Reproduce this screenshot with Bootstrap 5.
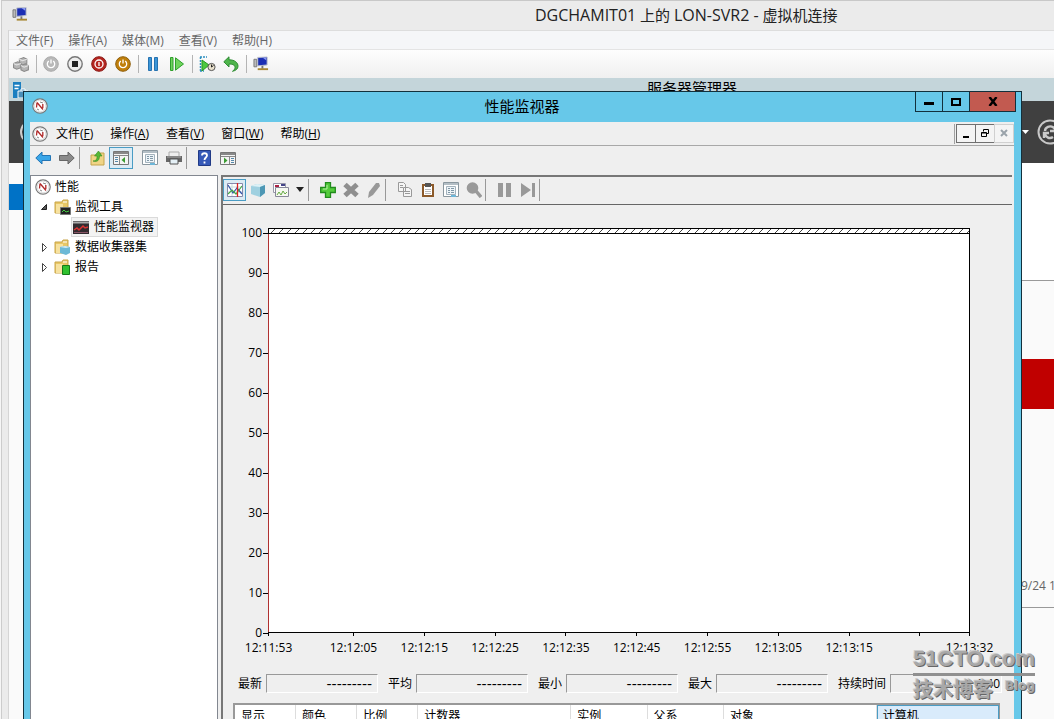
<!DOCTYPE html>
<html lang="zh-CN">
<head>
<meta charset="utf-8">
<meta name="viewport" content="width=device-width, initial-scale=1">
<title>DGCHAMIT01 上的 LON-SVR2 - 虚拟机连接</title>
<link href="https://cdn.jsdelivr.net/npm/bootstrap@5.3.0/dist/css/bootstrap.min.css" rel="stylesheet">
<style>
  body { font: 12px/16px "Open Sans", "Noto Sans CJK SC", sans-serif; color: #000; background: #f6f6f6; }
  button { padding: 0; border: 0; background: none; color: inherit; font: inherit; }
  svg { display: block; flex: none; }

  /* host window */
  .vm-window { background: #ebebeb; border-top: 1px solid #c8c8c8; border-left: 1px solid #ccc; margin-left: 1px; padding-left: 6px; }
  .vm-title { height: 29px; padding-bottom: 2px; }
  .vm-title h1 { font-size: 15px; line-height: 20px; color: #222; margin-left: 507px; white-space: nowrap; }
  .vm-title .host { font-size: 16px; }
  .vm-client { border-left: 1px solid #d5d5d5; }
  .vm-menu { height: 20px; background: #f5f6f8; color: #666; gap: 15px; padding: 2px 0 0 7px; border-top: 1px solid #ddd; border-bottom: 1px solid #e4e4e4; }
  .vm-tools { height: 28px; background: linear-gradient(#fefefe, #f0f0f0); }
  .tool { width: 24px; height: 22px; display: flex; align-items: center; justify-content: center; flex: none; }
  .tool-sep { width: 1px; height: 18px; background: #b4b4b4; margin: 0 2px 0 3px; }

  /* guest desktop and the window behind */
  .sm-title { height: 23px; background: #c4d5da; }
  .sm-title h2 { font-size: 15px; line-height: 20px; margin: 0 0 0 619px; }
  .sm-header { height: 62px; background: #404040; color: #fff; padding-left: 11px; }
  .sm-nav { width: 14px; background: #fafafa; padding-top: 21px; }
  .sm-nav-active { height: 26px; background: #0072c6; }
  .sm-side { width: 33px; background: #fafafa; color: #666; }
  .sm-blank { height: 118px; background: #fff; border-bottom: 1px solid #999; }
  .sm-alert { height: 50px; margin-top: 78px; background: #c00000; }
  .sm-time { height: 199px; padding-bottom: 13px; border-bottom: 1px solid #999; }

  /* performance monitor window */
  .pm-window { top: 13px; left: 14px; right: 32px; bottom: 0; background: #67c8e9; border: 1px solid #12303c; border-bottom: 0; padding: 0 7px 0 6px; }
  .pm-title { height: 30px; padding: 0 0 2px 2px; }
  .pm-title h2 { font-size: 15px; line-height: 20px; padding-right: 18px; }
  .pm-caption { top: -1px; right: -2px; }
  .pm-caption button { height: 21px; width: 28px; border: 1px solid #12303c; margin-left: -1px; display: flex; align-items: center; justify-content: center; }
  .pm-caption button.pm-close { width: 47px; background: #c25a50; }
  .pm-body { background: #efefef; min-height: 0; }
  .pm-menu { height: 24px; padding-left: 2px; border-bottom: 1px solid #a8a8a8; }
  .pm-menu-items { gap: 17px; padding-left: 8px; }
  .mdi { border-left: 1px solid #a0a0a0; padding: 0 1px; height: 20px; }
  .mdi button { width: 20px; height: 19px; border: 1px solid #707070; background: #f4f4f4; margin-right: -1px; display: flex; align-items: center; justify-content: center; }
  .mdi button:disabled { border-color: #d0d0d0; }
  .pm-tools { height: 26px; padding: 0 0 2px 1px; }
  .tool-gap { width: 5px; }
  .pm-sep { width: 1px; height: 22px; background: #999; margin: 0 5px 0 0; }
  .tool-on { background: #dcebf4; border: 1px solid #4a9cc4; }
  .pm-panes { gap: 3px; min-height: 0; padding: 3px 2px 0 0; }

  .tree-pane { width: 188px; background: #fff; border: 1px solid #828790; border-bottom: 0; padding: 1px 0 0 4px; flex: none; }
  .tree-pane li { height: 20px; display: flex; align-items: center; gap: 4px; }
  .tree-l1 { padding-left: 4px; }
  .tree-l2 { padding-left: 36px; }
  .tree-pane .twisty { width: 11px; height: 12px; }
  .tree-pick { background: #f3f3f3; border: 1px solid #dadada; height: 20px; padding: 0 3px 0 1px; gap: 5px; }

  .chart-pane { border-left: 2px solid #777; border-top: 2px solid #777; min-width: 0; }
  .chart-tools { height: 28px; padding-bottom: 2px; border-bottom: 1px solid #666; }
  .chart-tools .tool { width: 23px; }
  .chart-tools .caret-tool { width: 16px; }
  .chart-sep { width: 1px; height: 22px; background: #999; margin-right: 7px; }
  .chart-area { padding: 23px 42px 0 0; min-height: 0; }
  .y-axis { width: 45px; margin-top: 5px; }
  .y-axis span { height: 0; display: flex; align-items: center; justify-content: flex-end; gap: 1px; }
  .y-axis span::after { content: ""; width: 5px; height: 1px; background: #000; }
  .plot { border-right: 1px solid #000; border-bottom: 1px solid #000; background: #fff; }
  .plot-cap { height: 6px; border: solid #000; border-width: 1px 0 1px 1px; background: #fff; }
  .plot-data { border-left: 1px solid #b03030; }
  .x-axis { display: grid; grid-template-columns: 12fr repeat(8, 10fr) 7fr 0; margin: 0 43px 0 45px; height: 24px; }
  .x-axis span { width: 1px; display: flex; flex-direction: column; align-items: center; gap: 4px; white-space: nowrap; }
  .x-axis span::before { content: ""; width: 1px; height: 3px; background: #000; flex: none; }

  .stats { padding: 17px 0 0 15px; gap: 10px; height: 46px; }
  .stats label { margin-right: 4px; white-space: nowrap; }
  .stats input { width: 112px; height: 19px; border: 1px solid; border-color: #999 #fff #fff #999; background: #efefef; padding: 0 5px 0 0; text-align: right; border-radius: 0; color: #000; }
  .stats input.no-value { font: 14px "DejaVu Sans", sans-serif; }
  .stats input.short-value { padding-right: 1px; }
  .counter-wrap { margin: 0 12px 0 10px; height: 16px; border: 2px solid #999; border-width: 2px 1px 0 2px; background: #fff; overflow: hidden; }
  .counters { width: 100%; table-layout: fixed; border-collapse: separate; border-spacing: 0; }
  .counters th { font-weight: normal; padding: 3px 0 0 6px; height: 24px; line-height: 16px; vertical-align: top; border-right: 1px solid #ddd; }
  .counters th.sorted { background: #d9ebfb; border: 1px solid #4a9cc4; padding: 2px 0 0 5px; }

  .wm { right: 19px; bottom: 15px; color: #a8a8a8; font-weight: bold; text-shadow: 1px 1px 0 #666, -1px -1px 0 #ccc; pointer-events: none; }
  .wm-top { font: bold 22px/28px "Liberation Sans", sans-serif; border-bottom: 3px solid #909090; }
  .wm-cn { font-size: 20px; line-height: 28px; }
  .wm-blog { font: bold 12px/20px "DejaVu Sans", sans-serif; }
</style>
</head>
<body class="overflow-hidden">
<svg width="0" height="0" class="position-absolute" aria-hidden="true">
  <symbol id="gauge" viewBox="0 0 16 16"><circle cx="8" cy="8" r="7.200" fill="#f4f4f4" stroke="#777" stroke-width="1.200"/><circle cx="8" cy="8" r="5.900" fill="#fff" stroke="#ddd"/><path d="M4.500 9.500 5 4.500M5 4.500l6 7M10.800 6v4" fill="none" stroke="#b02828" stroke-width="1.300"/><path d="M8 4l3 1M5 11l2 1" stroke="#888"/></symbol>
  <symbol id="folder" viewBox="0 0 17 17"><path d="M1 3h7l1-2h5v13H1z" fill="#e8c766" stroke="#c9a548"/><path d="M2 5h7v9H2z" fill="#f7e2a0"/><path d="M9 3h4" stroke="#fff"/></symbol>
  <symbol id="props" viewBox="0 0 16 16"><path d="M.5.500h15v14H.5z" fill="#fff" stroke="#8a979f"/><path d="M1 2h14" stroke="#9aa8b2" stroke-width="1.500"/><path d="M3.500 4.500h9v8h-9z" fill="#eef4f8" stroke="#a3b2bc"/><path d="M5 6.500h2m1 0h3M5 8.500h2m1 0h3M5 10.500h2m1 0h3" stroke="#7f97a6"/><path d="M8 14h5" stroke="#6db6d8" stroke-width="2"/></symbol>
  <symbol id="pc" viewBox="0 0 17 16"><path d="M1 3h3v8H1z" fill="#bbb" stroke="#777"/><path d="M5 1l10-.5V9L5 10z" fill="#1c2fb4" stroke="#c0c4cc"/><path d="M10 1l4 0v3z" fill="#8d9cf0"/><path d="M10 10v3" stroke="#777" stroke-width="2"/><path d="M5 13.500h11" stroke="#a88732" stroke-width="2"/></symbol>
</svg>

<main class="vm-window vh-100 d-flex flex-column">
  <header class="vm-title d-flex align-items-center">
    <svg width="16" height="15" class="ms-1"><use href="#pc"/></svg>
    <h1 class="fw-normal mb-0"><span class="host">DGCHAMIT01</span> 上的 <span class="host">LON-SVR2 -</span> 虚拟机连接</h1>
  </header>
  <div class="vm-client flex-fill d-flex flex-column">
    <nav class="vm-menu d-flex align-items-center" aria-label="虚拟机菜单">
      <button>文件(F)</button><button>操作(A)</button><button>媒体(M)</button><button>查看(V)</button><button>帮助(H)</button>
    </nav>
    <div class="vm-tools d-flex align-items-center" role="toolbar" aria-label="虚拟机工具">
      <button class="tool" aria-label="Ctrl+Alt+Del"><svg width="17" height="15" viewBox="0 0 16 14"><g fill="#b5b5b5" stroke="#8b8b8b"><path d="M6 2l4-1.500 3 1.500v4l-4 1.500-3-1.500z"/><path d="M.5 6l4-1.500 3 1.500v4l-4 1.500-3-1.500z"/><path d="M7.500 8l4-1.500 3 1.500v4l-4 1.500-3-1.500z"/></g><path d="M6 2l3 1.500L13 2M.5 6l3 1.500 4-1.500M7.500 8l3 1.500L14.500 8" fill="none" stroke="#e4e4e4"/></svg></button>
      <span class="tool-sep"></span>
      <button class="tool" aria-label="启动"><svg width="16" height="16" viewBox="0 0 16 16"><circle cx="8" cy="8" r="7.300" fill="#b8b8b8" stroke="#aaa"/><path d="M8 3.500v4M5.800 5a3.700 3.700 0 1 0 4.400 0" fill="none" stroke="#fff" stroke-width="1.300"/></svg></button>
      <button class="tool" aria-label="关闭"><svg width="16" height="16" viewBox="0 0 16 16"><circle cx="8" cy="8" r="7.200" fill="#eee" stroke="#777" stroke-width="1.400"/><path d="M5 5h6v6H5z" fill="#222"/></svg></button>
      <button class="tool" aria-label="关机"><svg width="16" height="16" viewBox="0 0 16 16"><circle cx="8" cy="8" r="7.300" fill="#b52620" stroke="#8b1a16"/><circle cx="8" cy="8" r="4" fill="none" stroke="#fff" stroke-width="1.300"/><path d="M8 6v4" stroke="#fff" stroke-width="1.300"/></svg></button>
      <button class="tool" aria-label="保存"><svg width="16" height="16" viewBox="0 0 16 16"><circle cx="8" cy="8" r="7.300" fill="#c07f0b" stroke="#8f5f0c"/><path d="M8 3.500v4M5.800 5a3.700 3.700 0 1 0 4.400 0" fill="none" stroke="#fff" stroke-width="1.300"/></svg></button>
      <span class="tool-sep"></span>
      <button class="tool" aria-label="暂停"><svg width="12" height="14" viewBox="0 0 12 14"><path d="M1.500.5h3v13h-3zM7.500.5h3v13h-3z" fill="#3b96d8" stroke="#2672b0"/></svg></button>
      <button class="tool" aria-label="重置"><svg width="14" height="14" viewBox="0 0 14 14"><path d="M.5.500h2.500v13H.5zM5.500.8l8 6.200-8 6.200z" fill="#6fd45c" stroke="#2f9f2c"/></svg></button>
      <span class="tool-sep"></span>
      <button class="tool" aria-label="检查点"><svg width="17" height="16" viewBox="0 0 17 16"><path d="M1 1h7M1.500 1v14M1 15h4" stroke="#2b8fc0" stroke-width="1.500" stroke-dasharray="2 1"/><path d="M3 4l7 5-7 6z" fill="#4ec83f" stroke="#279822"/><circle cx="12.500" cy="11" r="3.600" fill="#e8e0cc" stroke="#555"/><path d="M12.500 8.500V11l2-1.500" fill="none" stroke="#222"/></svg></button>
      <button class="tool" aria-label="还原"><svg width="16" height="16" viewBox="0 0 16 16"><path d="M6 .8v3c6 0 9 3 9 6.500 0 2.500-2 4.200-5.500 5 2-1.500 3-3 2.500-4.500C11.500 8.500 9 8 6 8v3L.8 5.800z" fill="#4fb54c" stroke="#2f8c34"/></svg></button>
      <span class="tool-sep"></span>
      <button class="tool" aria-label="增强会话"><svg width="16" height="16"><use href="#pc"/></svg></button>
    </div>

    <section class="flex-fill position-relative d-flex flex-column overflow-hidden">
      <div class="sm-title d-flex">
        <svg width="15" height="16" viewBox="0 0 15 16" class="mt-1 ms-1"><path d="M0 0h8v16H0z" fill="#1b7fc0"/><path d="M1.500 3.500h5M1.500 6.500h4" stroke="#fff" stroke-width="1.500"/><path d="M5 9h10v7H5zM8 9V7h4v2" fill="#4a8fb8" stroke="#fff"/></svg>
        <h2 class="fw-normal">服务器管理器</h2>
      </div>
      <div class="sm-header d-flex align-items-center justify-content-between overflow-hidden">
        <svg width="24" height="24" viewBox="0 0 24 24"><circle cx="12" cy="12" r="11" fill="none" stroke="#ccc" stroke-width="2"/></svg>
        <div class="d-flex align-items-center">
          <svg width="7" height="4" viewBox="0 0 7 4" class="me-2"><path d="M0 0h7L3.500 4z" fill="#fff"/></svg>
          <svg width="17" height="26" viewBox="0 0 17 26"><circle cx="13" cy="13" r="11.500" fill="none" stroke="#c8c8c8" stroke-width="2"/><path d="M8 12c0-4 5-6 8.500-3.500L18 10M8 15c1 4 5 5 8 3M7 19v-5h5M18 7v5h-5" fill="none" stroke="#c8c8c8" stroke-width="2.400"/></svg>
        </div>
      </div>
      <div class="flex-fill d-flex justify-content-between bg-white">
        <div class="sm-nav"><div class="sm-nav-active"></div></div>
        <div class="sm-side">
          <div class="sm-blank"></div>
          <div class="sm-alert"></div>
          <div class="sm-time d-flex align-items-end text-nowrap overflow-hidden">9/24 12:10</div>
        </div>
      </div>

      <article class="pm-window position-absolute d-flex flex-column">
        <header class="pm-title d-flex align-items-center position-relative">
          <svg width="16" height="16"><use href="#gauge"/></svg>
          <h2 class="fw-normal mb-0 flex-fill text-center">性能监视器</h2>
          <div class="pm-caption position-absolute d-flex">
            <button aria-label="最小化"><svg width="10" height="10" viewBox="0 0 10 10"><path d="M0 5h10v3H0z"/></svg></button>
            <button aria-label="最大化"><svg width="10" height="8" viewBox="0 0 10 8"><path d="M1 1h8v6H1z" fill="none" stroke="#000" stroke-width="2"/></svg></button>
            <button class="pm-close" aria-label="关闭窗口"><svg width="10" height="9" viewBox="0 0 10 9"><path d="M1.500 0l7 9M8.500 0l-7 9" stroke="#000" stroke-width="2.400"/></svg></button>
          </div>
        </header>
        <div class="pm-body flex-fill d-flex flex-column">
          <nav class="pm-menu d-flex align-items-center" aria-label="性能监视器菜单">
            <svg width="16" height="16"><use href="#gauge"/></svg>
            <div class="pm-menu-items d-flex flex-fill">
              <button>文件(<u>F</u>)</button><button>操作(<u>A</u>)</button><button>查看(<u>V</u>)</button><button>窗口(<u>W</u>)</button><button>帮助(<u>H</u>)</button>
            </div>
            <div class="mdi d-flex">
              <button aria-label="最小化子窗口"><svg width="8" height="9" viewBox="0 0 8 9"><path d="M1 7h6v2H1z"/></svg></button>
              <button aria-label="还原子窗口"><svg width="8" height="8" viewBox="0 0 8 8"><path d="M2.500 2.500v-2h5v4h-2M.5 3.500h5v4h-5zM.5 4h5" fill="none" stroke="#000"/></svg></button>
              <button disabled aria-label="关闭子窗口"><svg width="8" height="8" viewBox="0 0 8 8"><path d="M1 1l6 6M7 1L1 7" stroke="#9aa3aa" stroke-width="2"/></svg></button>
            </div>
          </nav>
          <div class="pm-tools d-flex align-items-center" role="toolbar" aria-label="控制台工具">
            <button class="tool" aria-label="后退"><svg width="16" height="14" viewBox="0 0 16 14"><path d="M.8 7L7 1v3.500h8.500v5H7V13z" fill="#3aa6e8" stroke="#2375b5"/></svg></button>
            <button class="tool" aria-label="前进"><svg width="16" height="14" viewBox="0 0 16 14"><path d="M15.200 7L9 1v3.500H.5v5H9V13z" fill="#8a8a8a" stroke="#666"/></svg></button>
            <span class="pm-sep"></span>
            <button class="tool" aria-label="上移"><svg width="15" height="16" viewBox="0 0 15 16"><path d="M1 5h8l1-2h4v12H1z" fill="#f0d486" stroke="#c5a54c"/><path d="M3 11c4 0 4-3 4-5H4.500L8.500 1l3.500 5H9.500c0 4-2 6.500-6.500 5z" fill="#55b836" stroke="#328a20" stroke-width=".6"/></svg></button>
            <button class="tool tool-on" aria-label="显示控制台树"><svg width="16" height="14" viewBox="0 0 16 14"><path d="M.5.500h15v13H.5z" fill="#f4f4f4" stroke="#777"/><path d="M1 2h14" stroke="#888" stroke-width="2"/><path d="M1 4.500h14M6.500 4v9" stroke="#888"/><path d="M2 6.500h3m-3 2h3m-3 2h3" stroke="#58a"/><path d="M12 6v6L8.500 9z" fill="#3a9c32"/></svg></button>
            <span class="tool-gap"></span>
            <button class="tool" aria-label="属性"><svg width="16" height="16"><use href="#props"/></svg></button>
            <button class="tool" aria-label="打印"><svg width="16" height="14" viewBox="0 0 16 14"><path d="M3 1h10v5H3z" fill="#eee" stroke="#aaa"/><path d="M0 5h16v6H0z" fill="#666"/><path d="M1 6h14" stroke="#aaa"/><path d="M4 8h8v5H4z" fill="#e5f0f6" stroke="#555"/></svg></button>
            <span class="pm-sep"></span>
            <button class="tool" aria-label="帮助"><svg width="13" height="16" viewBox="0 0 13 16"><path d="M.5.500h12v15H.5z" fill="#3659b8" stroke="#213a86"/><path d="M4 5.500C4 2.500 9 2.500 9 5.500c0 2-2.500 2-2.500 4.500M6.500 11.500v2" fill="none" stroke="#fff" stroke-width="1.800"/></svg></button>
            <button class="tool" aria-label="显示操作窗格"><svg width="16" height="13" viewBox="0 0 16 13"><path d="M.5.500h15v12H.5z" fill="#f4f4f4" stroke="#777"/><path d="M1 2h14" stroke="#888" stroke-width="2"/><path d="M1 4.500h14M9.500 4v8" stroke="#888"/><path d="M11 6.500h3m-3 2h3m-3 2h3" stroke="#58a"/><path d="M4 5.500v6L7.500 8.500z" fill="#3a9c32"/></svg></button>
          </div>

          <div class="pm-panes d-flex flex-fill">
            <ul class="tree-pane list-unstyled mb-0">
              <li><svg width="16" height="16"><use href="#gauge"/></svg>性能</li>
              <li class="tree-l1"><button class="twisty" aria-label="折叠"><svg width="11" height="12" viewBox="0 0 11 12"><path d="M7.500 3.500v5h-5z" fill="#555" stroke="#222"/></svg></button>
                <svg width="17" height="17" viewBox="0 0 17 17"><use href="#folder"/><path d="M6.500 8.500h10v7h-10z" fill="#222" stroke="#777"/><path d="M8 13l2-2 2 2 3-1" fill="none" stroke="#4c4"/></svg>监视工具</li>
              <li class="tree-l2"><span class="tree-pick d-flex align-items-center"><svg width="16" height="13" viewBox="0 0 16 13"><path d="M0 0h16v13H0z" fill="#332c30"/><path d="M0 1.500h16" stroke="#aaa" stroke-width="2"/><path d="M1 9l3-2 2 2 4-4 2 2 3-1" fill="none" stroke="#d33" stroke-width="1.500"/><path d="M1 11.500h14" stroke="#856"/></svg>性能监视器</span></li>
              <li class="tree-l1"><button class="twisty" aria-label="展开"><svg width="11" height="12" viewBox="0 0 11 12"><path d="M3.500 2.500v8l4-4z" fill="#fff" stroke="#444"/></svg></button>
                <svg width="17" height="17" viewBox="0 0 17 17"><use href="#folder"/><path d="M6 8l5-1 5 1v6l-4 2-6-2z" fill="#6db9d6"/><path d="M6 8l5-1 5 1-4 1z" fill="#d2ecf5"/></svg>数据收集器集</li>
              <li class="tree-l1"><button class="twisty" aria-label="展开"><svg width="11" height="12" viewBox="0 0 11 12"><path d="M3.500 2.500v8l4-4z" fill="#fff" stroke="#444"/></svg></button>
                <svg width="17" height="17" viewBox="0 0 17 17"><use href="#folder"/><path d="M8.500 6.500h7v9h-7z" fill="#2fc12f" stroke="#157a18"/></svg>报告</li>
            </ul>

            <section class="chart-pane flex-fill d-flex flex-column">
              <div class="chart-tools d-flex align-items-center" role="toolbar" aria-label="图表工具">
                <button class="tool tool-on" aria-label="查看当前活动"><svg width="16" height="14" viewBox="0 0 16 14"><path d="M.5.500h15v13H.5z" fill="#fff" stroke="#88a"/><path d="M1 4h14M1 9h14M5 1v12" stroke="#cdd"/><path d="M1 2l5 8 4-5 5 6" fill="none" stroke="#35a" stroke-width="1.200"/><path d="M1 11l4-4 4 4 6-8" fill="none" stroke="#4a4" stroke-width="1.200"/><path d="M10.500 0v14" stroke="#d22" stroke-width="1.300"/></svg></button>
                <button class="tool" aria-label="查看日志数据"><svg width="16" height="14" viewBox="0 0 16 14"><path d="M1 3l6-2 8 1v8l-5 4-9-3z" fill="#9fd0e0"/><path d="M1 3l6-2 8 1-5 2z" fill="#ddf1f6"/><path d="M10 4l5-2v8l-5 4z" fill="#4d97b4"/></svg></button>
                <button class="tool" aria-label="更改图形类型"><svg width="16" height="14" viewBox="0 0 16 14"><path d="M.5.500h12v9H.5z" fill="#fff" stroke="#99a"/><path d="M2 2h4v2H2z" fill="#a24"/><path d="M8 2h4" stroke="#448" stroke-width="2"/><path d="M2.500 4.500h13v9h-13z" fill="#f5f8f0" stroke="#889"/><path d="M4 12l2-3 2 3 2-4 2 3 2-2" fill="none" stroke="#6a4"/></svg></button>
                <button class="tool caret-tool" aria-label="图形类型列表"><svg width="8" height="5" viewBox="0 0 8 5"><path d="M0 0h8L4 5z" fill="#222"/></svg></button>
                <span class="chart-sep"></span>
                <button class="tool" aria-label="添加"><svg width="16" height="16" viewBox="0 0 16 16"><path d="M5.500.700h5v4.800h4.800v5h-4.800v4.800h-5v-4.800H.7v-5h4.800z" fill="#54cc3c" stroke="#218c1c" stroke-width="1.300"/><path d="M7 3v4H3" fill="none" stroke="#b4f0a0"/></svg></button>
                <button class="tool" aria-label="删除"><svg width="16" height="16" viewBox="0 0 16 16"><path d="M2 2.500l12 11M14 2.500l-12 11" stroke="#8f8f8f" stroke-width="5"/></svg></button>
                <button class="tool" aria-label="突出显示"><svg width="14" height="16" viewBox="0 0 14 16"><path d="M9 1l3 0 1 3-7 9-5 3 1-6z" fill="#999"/></svg></button>
                <span class="chart-sep"></span>
                <button class="tool" aria-label="复制"><svg width="14" height="15" viewBox="0 0 14 15"><path d="M.5.500h5l2 2v7h-7zM5.500 5.500h5l3 2v7h-8z" fill="#f5f5f5" stroke="#999"/><path d="M2 3.500h3M2 5.500h3M7 9.500h5m-5 2h5" stroke="#999"/></svg></button>
                <button class="tool" aria-label="粘贴"><svg width="12" height="14" viewBox="0 0 12 14"><path d="M1 2h10v11H1z" fill="#fff" stroke="#8c5a2a" stroke-width="2"/><path d="M3 0h6v4H3z" fill="#555"/><path d="M3 6.500h6m-6 2h6m-6 2h6" stroke="#bbb"/></svg></button>
                <button class="tool" aria-label="属性"><svg width="16" height="16"><use href="#props"/></svg></button>
                <button class="tool" aria-label="缩放"><svg width="16" height="16" viewBox="0 0 16 16"><circle cx="6.500" cy="6" r="5.800" fill="#999"/><path d="M10 9l5 6" stroke="#999" stroke-width="3.500"/></svg></button>
                <span class="chart-sep"></span>
                <button class="tool" aria-label="冻结显示"><svg width="13" height="14" viewBox="0 0 13 14"><path d="M0 0h5v14H0zM8 0h5v14H8z" fill="#999"/></svg></button>
                <button class="tool" aria-label="更新数据"><svg width="14" height="14" viewBox="0 0 14 14"><path d="M0 0l10 7-10 7zM11 0h3v14h-3z" fill="#999"/></svg></button>
                <span class="chart-sep"></span>
              </div>

              <div class="chart-area flex-fill d-flex">
                <div class="y-axis d-flex flex-column justify-content-between">
                  <span>100</span><span>90</span><span>80</span><span>70</span><span>60</span><span>50</span><span>40</span><span>30</span><span>20</span><span>10</span><span>0</span>
                </div>
                <div class="plot flex-fill d-flex flex-column">
                  <div class="plot-cap"><svg width="100%" height="4"><defs><pattern id="hatch" width="8" height="4" patternUnits="userSpaceOnUse"><path d="M2 4l4-4" stroke="#444"/></pattern></defs><rect width="100%" height="4" fill="url(#hatch)"/></svg></div>
                  <div class="plot-data flex-fill"></div>
                </div>
              </div>
              <div class="x-axis">
                <span>12:11:53</span><span>12:12:05</span><span>12:12:15</span><span>12:12:25</span><span>12:12:35</span><span>12:12:45</span><span>12:12:55</span><span>12:13:05</span><span>12:13:15</span><span></span><span>12:13:32</span>
              </div>
              <div class="stats d-flex align-items-start">
                <div class="d-flex align-items-center"><label for="s-last">最新</label><input class="no-value" id="s-last" readonly value="---------"></div>
                <div class="d-flex align-items-center"><label for="s-avg">平均</label><input class="no-value" id="s-avg" readonly value="---------"></div>
                <div class="d-flex align-items-center"><label for="s-min">最小</label><input class="no-value" id="s-min" readonly value="---------"></div>
                <div class="d-flex align-items-center"><label for="s-max">最大</label><input class="no-value" id="s-max" readonly value="---------"></div>
                <div class="d-flex align-items-center"><label for="s-dur">持续时间</label><input class="short-value" id="s-dur" readonly value="1:40"></div>
              </div>
              <div class="counter-wrap">
                <table class="counters">
                  <colgroup><col style="width:8%"><col style="width:8%"><col style="width:8%"><col style="width:20%"><col style="width:10%"><col style="width:10%"><col style="width:20%"><col style="width:16%"></colgroup>
                  <thead><tr><th>显示</th><th>颜色</th><th>比例</th><th>计数器</th><th>实例</th><th>父系</th><th>对象</th><th class="sorted">计算机</th></tr></thead>
                </table>
              </div>
            </section>
          </div>
        </div>
      </article>
    </section>
  </div>
</main>
<div class="wm position-absolute">
  <div class="wm-top">51CTO.com</div>
  <div class="d-flex justify-content-between"><span class="wm-cn">技术博客</span><span class="wm-blog">Blog</span></div>
</div>
<script src="https://cdn.jsdelivr.net/npm/bootstrap@5.3.0/dist/js/bootstrap.bundle.min.js"></script>
</body>
</html>
